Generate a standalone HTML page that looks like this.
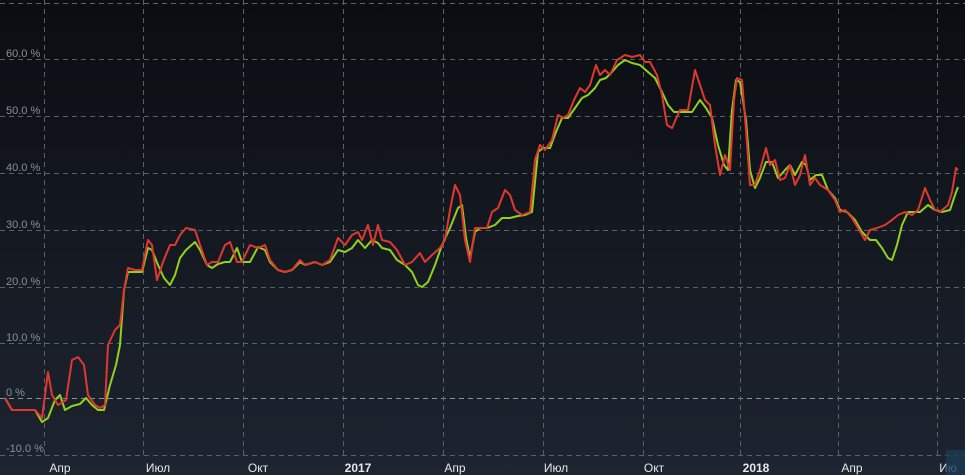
<!DOCTYPE html><html><head><meta charset="utf-8"><style>
body{margin:0;width:965px;height:475px;overflow:hidden;background:linear-gradient(#0a0d11,#1e2430);font-family:"Liberation Sans",sans-serif}
svg{position:absolute;left:0;top:0}
</style></head><body>
<svg width="965" height="475">
<g stroke="#5a616b" stroke-width="1" stroke-dasharray="5,4" fill="none">
<line x1="0" y1="3.5" x2="965" y2="3.5"/>
<line x1="0" y1="59.5" x2="965" y2="59.5"/><line x1="0" y1="116.5" x2="965" y2="116.5"/>
<line x1="0" y1="173.5" x2="965" y2="173.5"/><line x1="0" y1="230.5" x2="965" y2="230.5"/>
<line x1="0" y1="287.5" x2="965" y2="287.5"/><line x1="0" y1="343.5" x2="965" y2="343.5"/>
<line x1="0" y1="398.5" x2="965" y2="398.5" stroke="#8a9099"/><line x1="0" y1="455.5" x2="965" y2="455.5"/>
<line x1="44.5" y1="0" x2="44.5" y2="455"/><line x1="143.5" y1="0" x2="143.5" y2="455"/>
<line x1="243.5" y1="0" x2="243.5" y2="455"/><line x1="343.5" y1="0" x2="343.5" y2="455"/>
<line x1="443.5" y1="0" x2="443.5" y2="455"/><line x1="543.5" y1="0" x2="543.5" y2="455"/>
<line x1="643.5" y1="0" x2="643.5" y2="455"/><line x1="740.5" y1="0" x2="740.5" y2="455"/>
<line x1="838.5" y1="0" x2="838.5" y2="455"/><line x1="937.5" y1="0" x2="937.5" y2="455"/>
</g>
<g fill="#8a9099" font-size="11">
<text x="6" y="57">60.0 %</text><text x="6" y="114">50.0 %</text><text x="6" y="171">40.0 %</text>
<text x="6" y="228">30.0 %</text><text x="6" y="285">20.0 %</text><text x="6" y="341">10.0 %</text>
<text x="6" y="396">0 %</text><text x="6" y="452">-10.0 %</text>
</g>
<g fill="#e6e8ea" font-size="12" text-anchor="middle">
<text x="60" y="472">Апр</text><text x="158" y="472">Июл</text><text x="258" y="472">Окт</text>
<text x="358" y="472" font-weight="bold">2017</text><text x="455" y="472">Апр</text><text x="556" y="472">Июл</text>
<text x="654" y="472">Окт</text><text x="756" y="472" font-weight="bold">2018</text><text x="852" y="472">Апр</text>
<text x="948" y="472">Ию</text></g>
<rect x="946" y="450" width="19" height="25" fill="#1c3a55" opacity="0.8"/>
<polyline fill="none" stroke="#8fd21e" stroke-width="2" stroke-linejoin="round" points="5,398 12,410 35,410 42,422 48,418 55,400 60,395 65,410 72,406 80,404 86,398 92,405 98,410 104,410 110,385 116,365 120,345 124,290 128,272 135,272 142,272 148,248 152,250 158,265 164,278 170,285 175,275 180,258 186,250 195,242 200,250 207,265 212,268 218,264 225,262 230,262 237,248 242,262 250,262 258,247 265,250 270,262 278,270 285,272 292,270 300,262 305,265 315,262 322,265 330,262 338,250 345,252 352,248 358,240 365,248 372,240 378,243 382,248 390,250 397,260 405,265 412,272 418,285 422,287 428,282 435,265 442,245 450,228 458,208 462,205 466,238 470,258 475,232 480,228 487,228 495,225 502,218 510,218 518,216 525,215 532,212 538,152 543,148 550,148 556,132 562,118 568,118 575,108 582,98 588,95 595,88 600,80 606,78 612,72 618,65 625,60 632,63 640,65 648,72 655,78 662,92 668,105 674,112 682,112 692,112 700,100 706,108 712,118 718,145 724,165 728,170 732,110 736,80 740,82 746,120 750,170 755,188 760,178 766,162 772,162 778,178 785,170 790,165 795,175 802,162 806,165 810,180 816,175 822,175 828,190 835,198 840,210 847,212 855,220 862,232 870,240 876,240 882,248 888,258 892,260 897,245 902,225 908,212 915,212 920,212 928,205 935,210 942,212 950,210 955,195 958,187"/>
<polyline fill="none" stroke="#e0382f" stroke-width="2" stroke-linejoin="round" points="5,398 12,410 35,410 42,418 48,372 52,395 58,405 66,400 72,360 78,357 84,365 88,395 95,405 100,408 105,405 108,345 115,330 120,325 124,290 128,268 135,270 142,270 148,240 152,245 157,280 163,262 170,245 175,245 180,235 186,228 195,230 200,245 207,265 212,262 218,262 225,245 230,242 237,262 242,262 250,245 258,248 265,245 270,260 278,270 285,272 292,270 300,260 305,265 315,262 322,265 330,260 338,238 345,245 352,235 358,232 362,240 368,225 373,245 378,225 382,240 390,242 397,250 405,265 412,262 420,253 425,262 432,255 440,248 445,240 450,210 455,185 460,195 465,240 470,262 475,228 480,228 487,228 492,212 498,208 505,190 510,195 515,210 522,215 530,212 535,160 540,145 545,150 552,140 558,115 563,118 568,115 574,100 580,88 585,92 590,85 596,65 600,75 605,70 610,75 617,60 625,55 632,57 640,55 645,62 650,62 657,75 662,95 667,125 672,128 680,110 688,110 695,70 700,85 705,100 710,105 715,145 720,175 725,155 730,170 734,100 737,78 742,80 746,130 750,185 755,185 760,170 766,148 770,165 775,160 780,180 785,178 790,165 795,185 800,175 805,155 810,185 815,178 820,185 828,190 835,200 840,212 845,210 852,218 858,228 865,240 870,230 877,228 885,225 892,220 898,215 905,212 912,215 918,210 925,188 930,200 935,210 940,212 948,205 952,192 956,168 958,170"/>
</svg>
</body></html>
